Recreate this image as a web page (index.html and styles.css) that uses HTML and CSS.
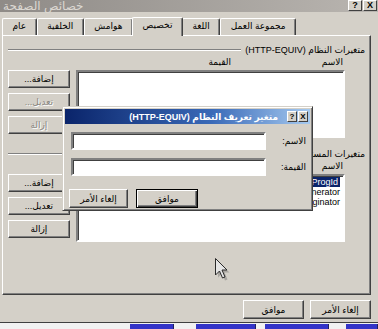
FILE: index.html
```html
<!DOCTYPE html>
<html lang="ar">
<head>
  <meta charset="UTF-8" />
  <meta name="viewport" content="width=device-width, initial-scale=1" />
  <title>خصائص الصفحة</title>
  <link rel="stylesheet" href="styles.css">
</head>
<body>

<div class="window">
  <div class="titlebar">
    <span class="title">خصائص الصفحة</span>
    <div class="caption-buttons">
      <span class="cap-btn">?</span>
      <span class="cap-btn">X</span>
    </div>
  </div>

  <div class="tabs">
    <div class="tab">عام</div>
    <div class="tab">الخلفية</div>
    <div class="tab">هوامش</div>
    <div class="tab active">تخصيص</div>
    <div class="tab">اللغة</div>
    <div class="tab">مجموعة العمل</div>
  </div>

  <div class="panel" dir="rtl">
    <div class="group-head">
      <span>متغيرات النظام (HTTP-EQUIV)</span>
      <i class="groove"></i>
    </div>
    <div class="cols">
      <span class="col-name">الاسم</span>
      <span>القيمة</span>
    </div>
    <div class="list-row">
      <div class="listbox"></div>
      <div class="btn-col">
        <button class="btn">إضافة...</button>
        <button class="btn" disabled>تعديل...</button>
        <button class="btn" disabled>إزالة</button>
      </div>
    </div>

    <div class="group-head second">
      <span>متغيرات المستخدم</span>
      <i class="groove"></i>
    </div>
    <div class="cols">
      <span class="col-name">الاسم</span>
      <span>القيمة</span>
    </div>
    <div class="list-row">
      <div class="listbox">
        <div class="item"><span class="selected">ProgId</span></div>
        <div class="item">Generator</div>
        <div class="item">Originator</div>
      </div>
      <div class="btn-col">
        <button class="btn">إضافة...</button>
        <button class="btn">تعديل...</button>
        <button class="btn">إزالة</button>
      </div>
    </div>
  </div>

  <div class="footer">
    <button class="btn wide">موافق</button>
    <button class="btn wide">إلغاء الأمر</button>
  </div>
</div>

<div class="taskbar">
  <span class="task t1"></span>
  <span class="task t2"></span>
  <span class="task t3"></span>
  <span class="task t4"></span>
</div>

<!-- small dialog opened on top of the page properties -->
<div class="dialog">
  <div class="dlg-titlebar">
    <span class="dlg-title" dir="rtl">متغير تعريف النظام (HTTP-EQUIV)</span>
    <span class="dlg-cap">?</span>
    <span class="dlg-cap">X</span>
  </div>
  <div class="dlg-form" dir="rtl">
    <label>الاسم:</label>
    <input type="text" class="field" />
    <label>القيمة:</label>
    <input type="text" class="field" />
  </div>
  <div class="dlg-buttons">
    <button class="btn cancel">إلغاء الأمر</button>
    <button class="btn default">موافق</button>
  </div>
</div>

<svg class="cursor" width="16" height="25" viewBox="0 0 16 25">
  <path d="M2.5 2.5 L2.5 19 L6.5 15 L9.5 22 L12 21 L9 14 L14 14 Z" fill="#555" opacity="0.35" transform="translate(1.5 1.5)"/>
  <path d="M1.5 1.5 L1.5 18 L5.5 14 L8.5 21 L11 20 L8 13 L13 13 Z" fill="#e4e4e4" stroke="#2a2a2a" stroke-width="1" stroke-linejoin="round"/>
</svg>

</body>
</html>
```

FILE: styles.css
```css
body {
  margin: 0;
  width: 378px;
  height: 329px;
  overflow: hidden;
  position: relative;
  background: #d4d0c8;
  font-family: "Liberation Sans", "DejaVu Sans", sans-serif;
  font-size: 9px;
  color: #000;
}
.window {
  height: 322px;
  border-bottom: 1px solid #404040;
}
.titlebar {
  height: 12px;
  display: flex;
  justify-content: space-between;
  align-items: center;
  padding: 0 1px 0 3px;
  background: linear-gradient(to right, #8f8b87, #b9b5b0);
}
.title {
  color: #dcd8d2;
  font-size: 12px;
}
.caption-buttons {
  display: flex;
  gap: 1px;
  align-self: flex-start;
}
.cap-btn {
  width: 12px;
  height: 9px;
  line-height: 9px;
  text-align: center;
  font-weight: bold;
  font-size: 9px;
  background: #d4d0c8;
  border: 1px solid;
  border-color: #fff #404040 #404040 #fff;
}
.tabs {
  display: flex;
  align-items: flex-end;
  height: 18px;
  margin-top: 5px;
  padding-left: 2px;
}
.tab {
  height: 16px;
  line-height: 15px;
  padding: 0 9.5px;
  border: 1px solid;
  border-color: #fff #404040 transparent #fff;
  border-bottom: none;
  box-shadow: inset -1px 0 #808080;
  border-radius: 2px 2px 0 0;
}
.tab.active {
  height: 18px;
  margin: 0 -1px;
  position: relative;
  z-index: 1;
  background: #d4d0c8;
  margin-bottom: -1px;
}
.panel {
  height: 250px;
  margin: 0 7px 0 2px;
  padding: 8px 5px 0 5px;
  border: 1px solid;
  border-color: #fff #404040 #404040 #fff;
  box-shadow: inset -1px -1px #808080;
}
.group-head {
  display: flex;
  align-items: center;
  gap: 4px;
  height: 11px;
  white-space: nowrap;
}
.group-head.second {
  margin-top: 10px;
}
.groove {
  flex: 1;
  border-top: 1px solid #808080;
  border-bottom: 1px solid #fff;
}
.cols {
  display: flex;
  height: 11px;
  margin-top: 2px;
  padding-right: 22px;
}
.col-name {
  width: 112px;
}
.list-row {
  display: flex;
  gap: 6px;
  margin-top: 2px;
  margin-right: 20px;
}
.listbox {
  width: 265px;
  height: 63px;
  background: #fff;
  border: 2px solid;
  border-color: #808080 #fff #fff #808080;
  box-shadow: inset 1px 1px #404040;
  padding-right: 1px;
  padding-top: 1px;
}
.item {
  height: 10px;
  line-height: 10px;
  padding-right: 2px;
}
.selected {
  background: #0a246a;
  color: #fff;
  padding: 0 2px;
}
.btn-col {
  display: flex;
  flex-direction: column;
  gap: 5px;
  width: 62px;
}
.btn {
  height: 18px;
  padding: 0;
  font: inherit;
  color: #000;
  background: #d4d0c8;
  border: 1px solid;
  border-color: #fff #404040 #404040 #fff;
  box-shadow: inset -1px -1px #808080;
}
.btn:disabled {
  color: #8a8782;
  text-shadow: 1px 1px #fff;
}
.footer {
  display: flex;
  justify-content: flex-end;
  gap: 6px;
  margin-top: 5px;
  padding-right: 7px;
}
.btn.wide {
  width: 61px;
  height: 19px;
}
.taskbar {
  display: flex;
  height: 6px;
  background: #f2f2f2;
}
.task {
  height: 5px;
  margin-top: 1px;
  background: #3434c8;
  border-right: 1px solid #202060;
}
.t1 { width: 43px; margin-left: 130px; }
.t2 { width: 60px; margin-left: 22px; }
.t3 { width: 64px; margin-left: 9px; }
.t4 { width: 31px; margin-left: 17px; }

.dialog {
  position: absolute;
  left: 62px;
  top: 106px;
  width: 245px;
  height: 101px;
  padding: 2px 2px 0 2px;
  background: #d4d0c8;
  border: 1px solid;
  border-color: #d4d0c8 #404040 #404040 #d4d0c8;
  box-shadow: inset 1px 1px #fff, inset -1px -1px #808080;
  z-index: 5;
}
.dlg-titlebar {
  height: 15px;
  display: flex;
  justify-content: flex-end;
  align-items: center;
  gap: 1px;
  padding-right: 2px;
  background: linear-gradient(to right, #0a246a, #3a6ab8 60%, #a6caf0);
}
.dlg-title {
  color: #fff;
  font-weight: bold;
  margin-right: 8px;
  white-space: nowrap;
}
.dlg-cap {
  width: 8px;
  height: 9px;
  line-height: 9px;
  text-align: center;
  font-weight: bold;
  font-size: 8px;
  background: #d4d0c8;
  border: 1px solid;
  border-color: #fff #404040 #404040 #fff;
}
.dlg-form {
  display: grid;
  grid-template-columns: 34px 195px;
  align-items: center;
  gap: 8px 6px;
  margin-top: 8px;
  padding-right: 4px;
}
.field {
  width: 191px;
  height: 14px;
  margin: 0;
  padding: 0;
  background: #fff;
  border: 2px solid;
  border-color: #808080 #fff #fff #808080;
  box-shadow: inset 1px 1px #404040;
}
.dlg-buttons {
  display: flex;
  gap: 8px;
  margin-top: 13px;
  padding-left: 4px;
}
.btn.cancel {
  width: 59px;
  height: 19px;
}
.btn.default {
  width: 62px;
  height: 19px;
  border-color: #000;
  box-shadow: inset 1px 1px #fff, inset -1px -1px #404040, inset -2px -2px #808080;
}
.cursor {
  position: absolute;
  left: 214px;
  top: 257px;
  z-index: 6;
}
```
